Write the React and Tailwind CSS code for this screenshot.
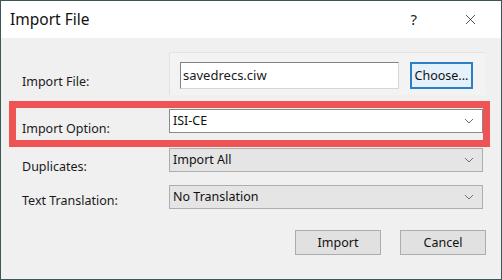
import { X } from "lucide-react";

const font = { fontFamily: '"Noto Sans", "Open Sans", sans-serif' };

function Chevron() {
  return (
    <svg width="10" height="6" viewBox="0 0 10 6" className="text-[#707070]">
      <polyline points="1,1 5,5 9,1" fill="none" stroke="currentColor" strokeWidth="1" />
    </svg>
  );
}

function Select({ value, white }) {
  return (
    <div
      className={`w-[314px] h-[24px] flex items-center justify-between pl-[3px] pr-[8px] border text-[12.5px] leading-[16px] text-[#111] ${
        white ? "bg-white border-[#8a8a8a]" : "bg-[#e5e5e5] border-[#adadad]"
      }`}
    >
      <span>{value}</span>
      <Chevron />
    </div>
  );
}

export default function App() {
  return (
    <div
      className="w-[502px] h-[280px] border border-[#3b5558] bg-[#f0f0f0] flex flex-col overflow-hidden"
      style={font}
    >
      {/* Title bar */}
      <div className="h-[37px] shrink-0 bg-white flex items-center pl-[9px] pr-[22px]">
        <span className="text-[15.5px] text-[#111] flex-1">Import File</span>
        <span className="text-[15px] text-[#222] mr-[45px]">?</span>
        <X size={17} strokeWidth={1.1} className="text-[#222]" />
      </div>

      {/* Body */}
      <div className="flex flex-col pl-[21px] text-[12.5px] leading-[16px] text-[#1a1a1a]">
        {/* Import File row */}
        <div className="flex items-start h-[43px] mt-[14px]">
          <span className="w-[147px] pt-[22px]">Import File:</span>
          <div className="w-[316px] h-[43px] border-t border-l border-[#e2e2e2] bg-[#f3f3f3] flex items-start pt-[9px] pl-[10px]">
            <div className="w-[219px] h-[27px] bg-white border border-[#828282] border-b-[#d6d6d6] border-r-[#d6d6d6] pl-[2px] pt-[4px] text-[13px] leading-[16px]">
              savedrecs.ciw
            </div>
            <button className="ml-[11px] w-[63px] h-[27px] border-2 border-[#2b7fc4] bg-[#e5f1fb] text-[12.5px] leading-[16px] text-[#111] flex items-center justify-center">
              Choose...
            </button>
          </div>
        </div>

        {/* Import Option row, highlighted */}
        <div className="relative flex items-start h-[24px] mt-[14px]">
          <div className="absolute left-[-13px] top-[-8px] w-[481px] h-[46px] border-[7px] border-[#ef5454] pointer-events-none" />
          <span className="w-[147px] pt-[12px]">Import Option:</span>
          <Select value="ISI-CE" white />
        </div>

        {/* Duplicates row */}
        <div className="flex items-start h-[24px] mt-[15px]">
          <span className="w-[147px] pt-[11px]">Duplicates:</span>
          <Select value="Import All" />
        </div>

        {/* Text Translation row */}
        <div className="flex items-start h-[24px] mt-[13px]">
          <span className="w-[147px] pt-[8px]">Text Translation:</span>
          <Select value="No Translation" />
        </div>

        {/* Buttons */}
        <div className="flex mt-[21px] ml-[273px] gap-[19px]">
          <button className="w-[86px] h-[25px] bg-[#e1e1e1] border border-[#adadad] text-[12.5px] leading-[16px] text-[#111]">
            Import
          </button>
          <button className="w-[86px] h-[25px] bg-[#e1e1e1] border border-[#adadad] text-[12.5px] leading-[16px] text-[#111]">
            Cancel
          </button>
        </div>
      </div>
    </div>
  );
}
